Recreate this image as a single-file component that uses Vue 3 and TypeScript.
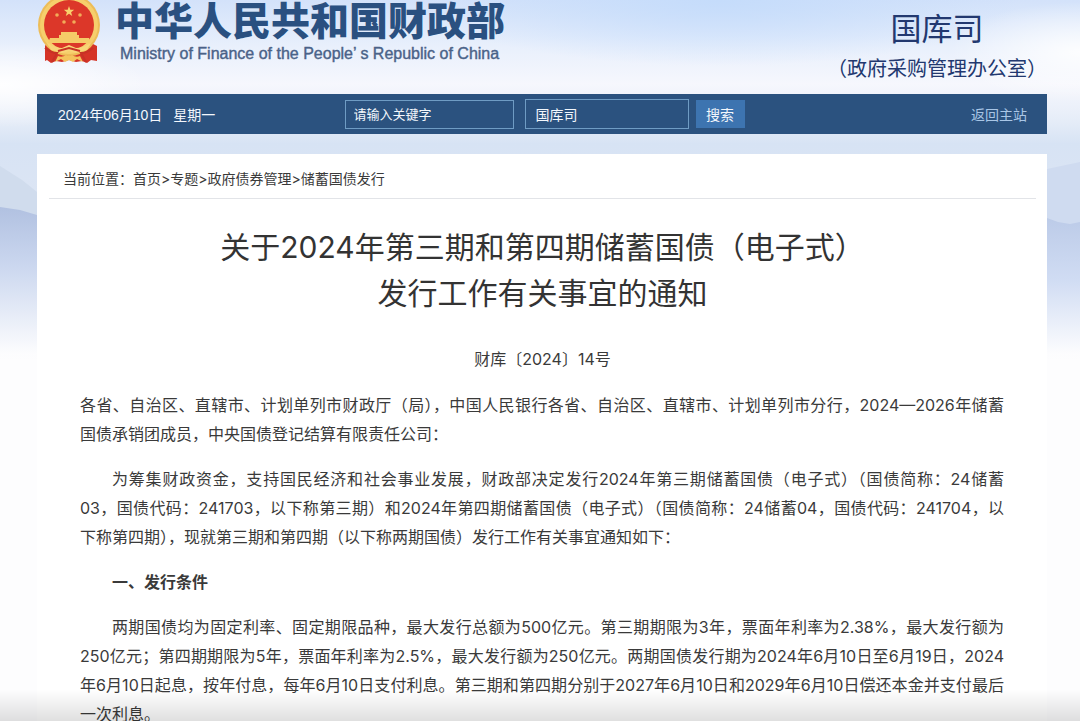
<script setup lang="ts">
import { ref } from 'vue'

interface Paragraph {
  lines: string[]
  indent: boolean
  heading?: boolean
}

const keyword = ref('')
const scope = ref('国库司')

const crumbs: string[] = ['首页', '专题', '政府债券管理', '储蓄国债发行']

const paragraphs: Paragraph[] = [
  {
    indent: false,
    lines: [
      '各省、自治区、直辖市、计划单列市财政厅（局），中国人民银行各省、自治区、直辖市、计划单列市分行，2024—2026年储蓄',
      '国债承销团成员，中央国债登记结算有限责任公司：',
    ],
  },
  {
    indent: true,
    lines: [
      '为筹集财政资金，支持国民经济和社会事业发展，财政部决定发行2024年第三期储蓄国债（电子式）（国债简称：24储蓄',
      '03，国债代码：241703，以下称第三期）和2024年第四期储蓄国债（电子式）（国债简称：24储蓄04，国债代码：241704，以',
      '下称第四期），现就第三期和第四期（以下称两期国债）发行工作有关事宜通知如下：',
    ],
  },
  { indent: true, heading: true, lines: ['一、发行条件'] },
  {
    indent: true,
    lines: [
      '两期国债均为固定利率、固定期限品种，最大发行总额为500亿元。第三期期限为3年，票面年利率为2.38%，最大发行额为',
      '250亿元；第四期期限为5年，票面年利率为2.5%，最大发行额为250亿元。两期国债发行期为2024年6月10日至6月19日，2024',
      '年6月10日起息，按年付息，每年6月10日支付利息。第三期和第四期分别于2027年6月10日和2029年6月10日偿还本金并支付最后',
      '一次利息。',
    ],
  },
]
</script>

<template>
  <div class="page">
    <svg class="scenery" viewBox="0 0 1080 400" preserveAspectRatio="none" aria-hidden="true">
      <defs>
        <linearGradient id="sky" x1="0" y1="0" x2="0" y2="1">
          <stop offset="0" stop-color="#d3e2fa" />
          <stop offset="0.12" stop-color="#e9f0fc" />
          <stop offset="0.21" stop-color="#f6f7fd" />
          <stop offset="0.3" stop-color="#e6edf8" />
          <stop offset="0.36" stop-color="#d7e3f4" />
          <stop offset="0.5" stop-color="#dce5f4" />
          <stop offset="0.9" stop-color="#fdfdfe" />
        </linearGradient>
        <radialGradient id="glow">
          <stop offset="0" stop-color="#c5dcfb" />
          <stop offset="1" stop-color="#c5dcfb" stop-opacity="0" />
        </radialGradient>
        <radialGradient id="cloud">
          <stop offset="0" stop-color="#ffffff" stop-opacity="0.9" />
          <stop offset="1" stop-color="#ffffff" stop-opacity="0" />
        </radialGradient>
        <linearGradient id="ridgeLeft" x1="0" y1="0" x2="0" y2="1">
          <stop offset="0" stop-color="#b1c1e1" />
          <stop offset="0.4" stop-color="#cbd7ef" />
          <stop offset="1" stop-color="#fdfdfe" />
        </linearGradient>
        <linearGradient id="ridgeRight" x1="0" y1="0" x2="0" y2="1">
          <stop offset="0" stop-color="#bccbe8" />
          <stop offset="0.45" stop-color="#d0dcf3" />
          <stop offset="1" stop-color="#fdfdfe" />
        </linearGradient>
      </defs>
      <rect width="1080" height="400" fill="url(#sky)" />
      <ellipse cx="720" cy="0" rx="300" ry="66" fill="url(#glow)" />
      <ellipse cx="0" cy="85" rx="150" ry="42" fill="url(#cloud)" />
      <ellipse cx="1080" cy="52" rx="130" ry="50" fill="url(#cloud)" />
      <path d="M0 166 L22 180 L37 192 V215 H0Z" fill="#d0dced" />
      <path d="M0 207 L20 210 L37 215 V355 H0Z" fill="url(#ridgeLeft)" />
      <path d="M1047 169 L1080 162 V224 H1047Z" fill="#cfdbf0" />
      <path d="M1047 218 L1058 222 L1070 224 L1080 222 V355 H1047Z" fill="url(#ridgeRight)" />
    </svg>

    <header class="masthead">
      <div class="brand">
        <svg class="emblem" viewBox="0 0 64 64" aria-hidden="true">
          <path d="M9 44 H56 L60 46 V61 L54 60 L50 63 L45 61 L39 62 L32 60 L25 62 L19 61 L14 63 L10 60 L8 61 V46Z" fill="#d53427" />
          <circle cx="32" cy="25" r="31" fill="#edbd58" />
          <circle cx="32" cy="25" r="29" fill="#f6cf6c" />
          <circle cx="32" cy="25" r="25" fill="#dc3729" />
          <path d="M32 6 l1.3 3.7 3.9 .1 -3.1 2.4 1.1 3.8 -3.2 -2.2 -3.2 2.2 1.1 -3.8 -3.1 -2.4 3.9 -.1z" fill="#f8d16d" />
          <g fill="#f2ab58">
            <circle cx="20" cy="15" r="1.8" />
            <circle cx="43" cy="15" r="1.8" />
            <circle cx="27" cy="22" r="1.8" />
            <circle cx="37" cy="22" r="1.8" />
          </g>
          <path d="M24 32 H40 V35 H42 V38 H52 L54 43 H11 L13 38 H22 V35 H24Z" fill="#f5cb68" />
          <path d="M10 43 Q19 48 25 48 L32 45 L39 48 Q46 48 54 43 L50 50 L39 53 L32 51 L25 53 L14 50Z" fill="#f8d578" />
          <path d="M8 48 Q14 53 20 53 L15 62 M56 48 Q50 53 44 53 L49 62 M21 51 L32 48 L43 51" fill="none" stroke="#c73225" stroke-width="2" />
          <path d="M18 62 L21 56 Q25 58 29 55 Q32 57 35 55 Q39 58 43 56 L46 62 L40 59 L36 62 L32 60 L28 62 L24 59Z" fill="#f4c35c" />
        </svg>
        <div class="names">
          <div class="name-zh">中华人民共和国财政部</div>
          <div class="name-en">Ministry of Finance of the People’ s Republic of China</div>
        </div>
      </div>
      <div class="department">
        <div class="dept-name">国库司</div>
        <div class="dept-note">（政府采购管理办公室）</div>
      </div>
    </header>

    <nav class="toolbar">
      <div class="date"><span>2024年06月10日</span><span>星期一</span></div>
      <form class="search" @submit.prevent>
        <input v-model="keyword" class="keyword" type="text" placeholder="请输入关键字" aria-label="请输入关键字" />
        <select v-model="scope" class="scope" aria-label="国库司">
          <option value="国库司">国库司</option>
        </select>
        <button class="submit" type="submit">搜索</button>
      </form>
      <a class="home" href="#">返回主站</a>
    </nav>

    <main class="sheet">
      <div class="crumbs">
        <span>当前位置：</span>
        <template v-for="(crumb, i) in crumbs" :key="crumb"><span v-if="i > 0">&gt;</span><a href="#">{{ crumb }}</a></template>
      </div>
      <article>
        <h1>关于2024年第三期和第四期储蓄国债（电子式）<br />发行工作有关事宜的通知</h1>
        <p class="doc-no">财库〔2024〕14号</p>
        <div class="content">
          <component
            :is="p.heading ? 'h2' : 'p'"
            v-for="(p, i) in paragraphs"
            :key="i"
            :class="{ indent: p.indent }"
          >
            <span v-for="line in p.lines" :key="line" class="line">{{ line }}</span>
          </component>
        </div>
      </article>
    </main>
    <div class="fade"></div>
  </div>
</template>

<style>
body {
  margin: 0;
  background: #fdfdfe;
}
</style>

<style scoped>
.page {
  position: relative;
  box-sizing: border-box;
  min-height: 100vh;
  padding: 0 33px 0 37px;
  font-family: Inter, "Noto Sans CJK SC", sans-serif;
  color: #3a3a3a;
}

.scenery {
  position: absolute;
  top: 0;
  left: 0;
  z-index: -1;
  width: 100%;
  height: 400px;
}

.masthead {
  display: flex;
  justify-content: space-between;
  height: 94px;
}

.brand {
  display: flex;
  gap: 14px;
}

.emblem {
  width: 64px;
  height: 64px;
}

.name-zh {
  font-size: 39px;
  font-weight: 900;
  line-height: 42px;
  color: #2a5080;
  white-space: nowrap;
}

.name-en {
  padding-left: 5px;
  font-family: "Liberation Sans", Arial, sans-serif;
  font-size: 16px;
  line-height: 24px;
  color: #4a6288;
  -webkit-text-stroke: 0.4px #4a6288;
  white-space: nowrap;
}

.department {
  padding-top: 9px;
  color: #22386f;
  text-align: center;
  white-space: nowrap;
}

.dept-name {
  font-size: 31px;
  line-height: 40px;
}

.dept-note {
  font-size: 20px;
  line-height: 40px;
}

.toolbar {
  display: grid;
  grid-template-columns: 1fr auto 1fr;
  align-items: center;
  height: 40px;
  background: #2b527f;
  font-size: 14px;
  color: #f3f7fc;
}

.date {
  display: flex;
  gap: 11px;
  padding-left: 21px;
  font-family: "Liberation Sans", "Noto Sans CJK SC", sans-serif;
}

.search {
  display: flex;
  align-items: center;
  padding-left: 5px;
}

.keyword,
.scope {
  box-sizing: border-box;
  border: 1px solid #6f9cc4;
  border-radius: 0;
  background: transparent;
  font-family: inherit;
  color: #f3f7fc;
  outline: none;
}

.keyword {
  width: 169px;
  height: 29px;
  margin-right: 11px;
  padding: 0 8px;
  font-size: 13px;
}

.keyword::placeholder {
  color: #f3f7fc;
  opacity: 1;
}

.scope {
  width: 164px;
  height: 30px;
  margin-right: 7px;
  padding: 0 10px;
  font-size: 14px;
  appearance: none;
}

.submit {
  width: 49px;
  height: 28px;
  padding: 0;
  border: 0;
  background: #3d74b0;
  font-family: inherit;
  font-size: 14px;
  color: #f3f7fc;
}

.home {
  padding-right: 20px;
  color: #a9c6e6;
  text-align: right;
  text-decoration: none;
}

.sheet {
  margin-top: 20px;
  padding: 0 11px 0 12px;
  background: #fff;
}

.crumbs {
  display: flex;
  height: 44px;
  padding-left: 14px;
  border-bottom: 1px solid #e2e4e8;
  font-size: 14px;
  line-height: 50px;
}

.crumbs a {
  color: inherit;
  text-decoration: none;
}

h1 {
  margin: 25px 0 29px;
  font-size: 30px;
  font-weight: 400;
  line-height: 46px;
  color: #333;
  text-align: center;
}

.doc-no {
  margin: 0 0 17px;
  font-size: 16px;
  line-height: 29px;
  text-align: center;
}

.content {
  padding: 0 32px 0 31px;
  font-size: 16px;
  line-height: 29px;
}

.content p,
.content h2 {
  margin: 0 0 16px;
  font-size: inherit;
}

.line {
  display: block;
  text-align: justify;
  text-align-last: justify;
}

.line:last-child {
  text-align-last: left;
}

.indent .line:first-child {
  text-indent: 2em;
}

.indent .line:not(:first-child) {
  text-indent: 0;
}

.fade {
  position: fixed;
  right: 0;
  bottom: 0;
  left: 0;
  height: 32px;
  background: linear-gradient(rgba(0, 0, 0, 0), rgba(0, 0, 0, 0.12));
  pointer-events: none;
}
</style>
